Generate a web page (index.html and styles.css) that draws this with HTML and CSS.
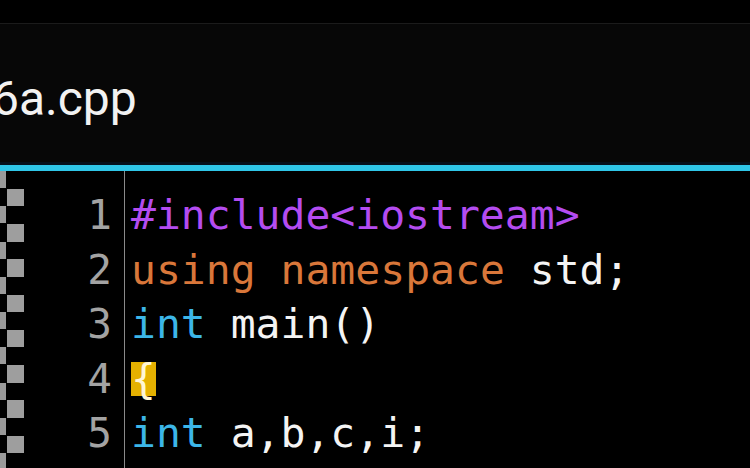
FILE: index.html
```html
<!DOCTYPE html>
<html>
<head>
<meta charset="utf-8">
<link rel="stylesheet" href="styles.css">
</head>
<body>
<div class="app">
  <div class="statusbar"></div>
  <div class="tabbar">
    <div class="tab">6a.cpp</div>
  </div>
  <div class="accent"></div>
  <div class="editor">
    <div class="marks">
      <div class="mark-col mark-left"></div>
      <div class="mark-col mark-right"></div>
    </div>
    <div class="numbers">
      <div class="ln">1</div>
      <div class="ln">2</div>
      <div class="ln">3</div>
      <div class="ln">4</div>
      <div class="ln">5</div>
    </div>
    <div class="code">
      <div class="line"><span class="pp">#include&lt;iostream&gt;</span></div>
      <div class="line"><span class="kw2">using</span> <span class="kw2">namespace</span> std;</div>
      <div class="line"><span class="kw">int</span> main()</div>
      <div class="line"><span class="brace">{</span></div>
      <div class="line"><span class="kw">int</span> a,b,c,i;</div>
    </div>
  </div>
</div>
</body>
</html>
```

FILE: styles.css
```css
html, body {
  margin: 0;
  padding: 0;
  background: #000;
  overflow: hidden;
}
.app {
  width: 750px;
  height: 468px;
  display: flex;
  flex-direction: column;
  background: #000;
}
.statusbar {
  height: 23px;
  background: #000;
  border-bottom: 1px solid #1b1b1b;
  flex: none;
}
.tabbar {
  height: 138px;
  background: #070707;
  flex: none;
  display: flex;
  align-items: flex-end;
  overflow: hidden;
}
.tab {
  font-family: Roboto, "Noto Sans", sans-serif;
  font-size: 48px;
  color: #f2f2f2;
  margin-left: -8px;
  line-height: 1;
  padding-bottom: 39px;
  white-space: nowrap;
}
.accent {
  flex: none;
  height: 6px;
  background: #2fc6e8;
  border-top: 3px solid #06101c;
}
.editor {
  flex: 1;
  display: flex;
  min-height: 0;
  overflow: hidden;
}
.marks {
  width: 24px;
  display: flex;
  flex: none;
}
.mark-col {
  flex: none;
  height: 100%;
}
.mark-left {
  width: 6px;
  background: repeating-linear-gradient(to bottom, #9a9a9a 0 17px, #000 17px 35.3px);
}
.mark-right {
  width: 17px;
  margin-left: 1px;
  background: repeating-linear-gradient(to bottom, #000 0 17.6px, #9e9e9e 17.6px 35.3px);
}
.numbers {
  width: 88px;
  flex: none;
  padding-top: 17px;
  padding-right: 12px;
  font-family: "DejaVu Sans Mono", monospace;
  font-size: 41px;
  line-height: 54.5px;
  color: #a3a3a3;
  text-align: right;
}
.code {
  flex: 1;
  padding-top: 17px;
  padding-left: 6px;
  border-left: 1px solid #8a8a8a;
  font-family: "DejaVu Sans Mono", monospace;
  font-size: 41.4px;
  line-height: 54.5px;
  color: #f4f4f4;
}
.line {
  white-space: pre;
}
.pp { color: #b44cf0; }
.kw2 { color: #d9773a; }
.kw { color: #3cb6e8; }
.brace {
  display: inline-block;
  line-height: 34px;
  background: #e5b100;
  color: #fff6d6;
}
```
